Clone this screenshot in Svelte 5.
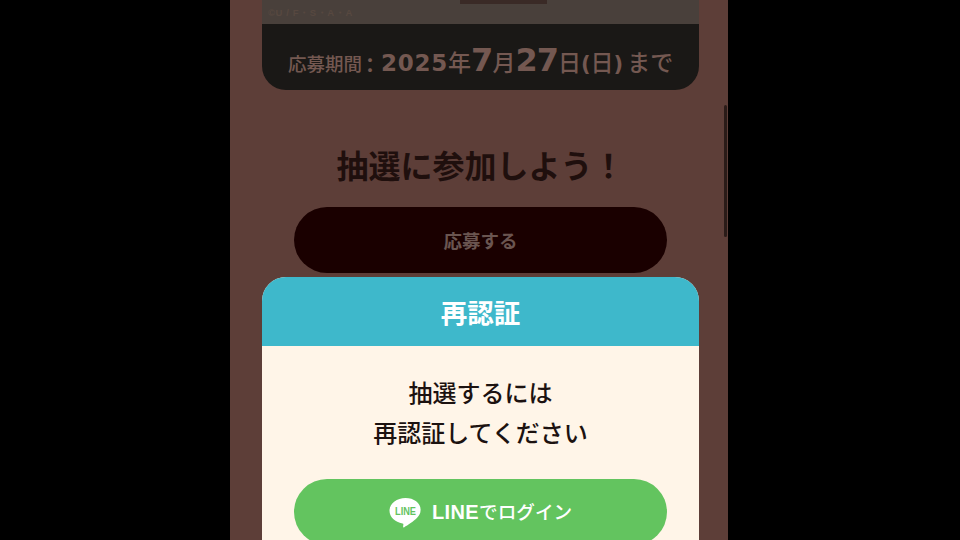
<script>
  let title = '抽選に参加しよう！';
</script>

<div class="stage">
  <div class="phone">
    <div class="campaign-card">
      <div class="visual">
        <div class="visual-box"></div>
        <span class="credit">©U / F・S・A・A</span>
      </div>
      <div class="period">
        <span class="label">応募期間</span><span class="colon">：</span><span class="num">2025</span><span class="unit">年</span><span class="big">7</span><span class="unit">月</span><span class="big">27</span><span class="unit">日</span><span class="paren">(</span><span class="unit">日</span><span class="paren">)</span><span class="unit tail">まで</span>
      </div>
    </div>

    <h2>{title}</h2>
    <div class="apply-btn">応募する</div>

    <div class="scrollbar"></div>

    <div class="modal">
      <div class="modal-head">再認証</div>
      <div class="modal-body">
        <p>抽選するには<br />再認証してください</p>
        <div class="line-btn">
          <svg width="33" height="31" viewBox="0 0 33 31">
            <path
              d="M16.5 1C7.600 1 .5 6.600 .5 13.800c0 6.400 5.600 11.600 13 12.600.9.2 1 .7.8 1.600l-.2 1.600c-.1.7.5 1 1.200.6 3-1.700 9.700-5.800 13-9.600 2.200-2.400 3.200-4.500 3.200-6.800C32.500 6.600 25.400 1 16.500 1z"
              fill="#fff"
            />
            <text x="16.500" y="18" class="line-mark" text-anchor="middle" textLength="21" lengthAdjust="spacingAndGlyphs">LINE</text>
          </svg>
          <span class="line-label"><b>LINE</b>でログイン</span>
        </div>
      </div>
    </div>
  </div>
</div>

<style>
  :global(body) {
    margin: 0;
    background: #000;
  }

  .stage {
    width: 960px;
    height: 540px;
    padding-left: 230px;
    box-sizing: border-box;
    background: #000;
    overflow: hidden;
    font-family: 'Noto Sans CJK JP', 'Noto Sans', sans-serif;
  }

  .phone {
    position: relative;
    display: flex;
    flex-direction: column;
    align-items: center;
    width: 498px;
    height: 540px;
    padding-left: 3px;
    box-sizing: border-box;
    overflow: hidden;
    background: #5d3e38;
  }

  .campaign-card {
    width: 437px;
    flex: none;
    border-radius: 0 0 24px 24px;
    overflow: hidden;
    background: #1a1816;
  }

  .visual {
    position: relative;
    height: 24px;
    background: #49403b;
  }

  .visual-box {
    width: 87px;
    height: 4px;
    margin-left: 198px;
    background: #3a2a26;
  }

  .credit {
    position: absolute;
    left: 6px;
    top: 7px;
    font-family: 'Liberation Sans', sans-serif;
    font-size: 9.500px;
    font-weight: 700;
    line-height: 11px;
    letter-spacing: 0.6px;
    color: #574840;
  }

  .period {
    display: flex;
    align-items: baseline;
    justify-content: center;
    height: 66px;
    padding-top: 18px;
    box-sizing: border-box;
    color: #745851;
    font-weight: 700;
    line-height: 36px;
    white-space: nowrap;
  }

  .label {
    font-size: 18.500px;
    font-weight: 500;
  }

  .colon {
    font-size: 20px;
    font-weight: 700;
    margin-right: -1px;
    transform: translate(-2px, 2px);
  }

  .num {
    font-family: 'DejaVu Sans', sans-serif;
    font-size: 23px;
    letter-spacing: 0.8px;
  }

  .big {
    font-family: 'DejaVu Sans', sans-serif;
    font-size: 32px;
    letter-spacing: -1px;
  }

  .unit {
    font-size: 23px;
    font-weight: 500;
  }

  .tail {
    margin-left: 4px;
  }

  .paren {
    font-family: 'DejaVu Sans', sans-serif;
    font-size: 21px;
    font-weight: 700;
  }

  h2 {
    margin: 52px 0 0;
    font-size: 32px;
    line-height: 44px;
    font-weight: 700;
    color: #1f0f0d;
  }

  .apply-btn {
    flex: none;
    display: flex;
    align-items: center;
    justify-content: center;
    width: 373px;
    height: 66px;
    margin-top: 21px;
    border-radius: 33px;
    background: #1a0000;
    color: #6a5550;
    font-size: 18.500px;
    font-weight: 700;
  }

  .scrollbar {
    position: absolute;
    right: 1px;
    top: 105px;
    width: 3px;
    height: 132px;
    border-radius: 2px;
    background: #2a1b18;
  }

  .modal {
    position: absolute;
    left: 32px;
    top: 277px;
    width: 437px;
    height: 300px;
    border-radius: 24px 24px 0 0;
    overflow: hidden;
    background: #fff5e8;
  }

  .modal-head {
    display: flex;
    align-items: center;
    justify-content: center;
    height: 69px;
    background: #3eb8cb;
    color: #fff;
    font-size: 26.500px;
    font-weight: 700;
  }

  .modal-body {
    display: flex;
    flex-direction: column;
    align-items: center;
    padding-top: 26px;
  }

  p {
    margin: 0;
    text-align: center;
    font-size: 24px;
    line-height: 40px;
    font-weight: 500;
    color: #1c1210;
  }

  .line-btn {
    display: flex;
    align-items: center;
    justify-content: center;
    gap: 10px;
    width: 373px;
    height: 66px;
    margin-top: 27px;
    border-radius: 33px;
    background: #63c45f;
    color: #fff;
    font-size: 18.600px;
    font-weight: 500;
  }

  .line-label {
    line-height: 24px;
    margin-top: -2px;
  }

  .line-label b {
    font-family: 'Liberation Sans', sans-serif;
    font-size: 20px;
    font-weight: 700;
    letter-spacing: 0.4px;
  }

  .line-mark {
    font-family: 'Liberation Sans', sans-serif;
    font-size: 11px;
    font-weight: 700;
    fill: #63c45f;
  }
</style>
